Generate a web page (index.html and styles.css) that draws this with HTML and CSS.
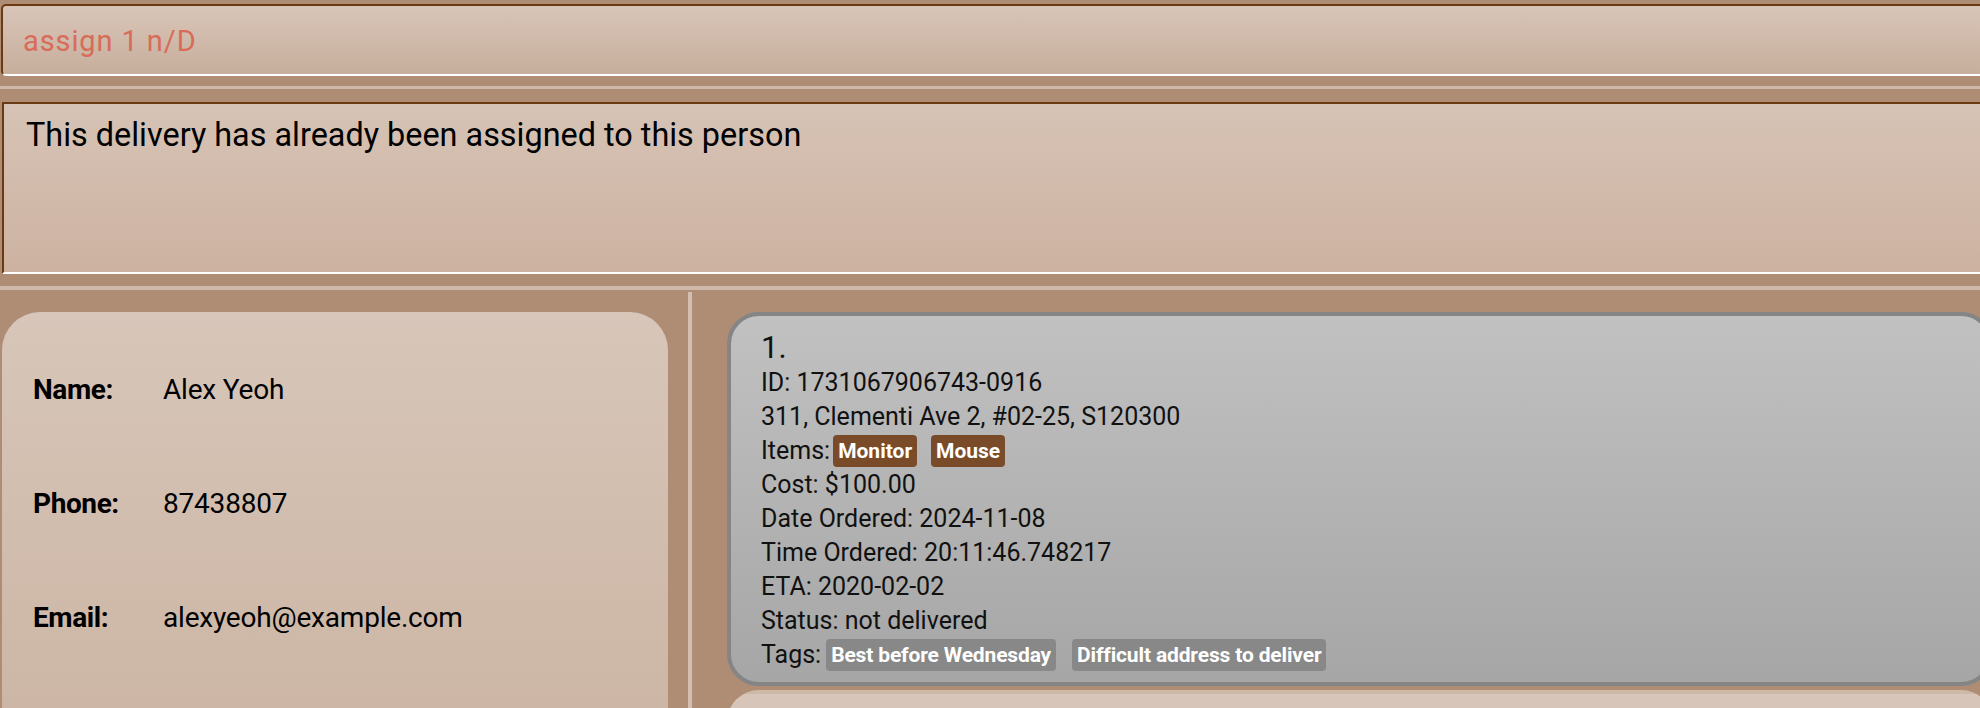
FILE: index.html
```html
<!DOCTYPE html>
<html lang="en">
<head>
<meta charset="utf-8">
<title>Delivery assignment</title>
<link rel="stylesheet" href="styles.css">
</head>
<body>
<div class="app">
  <div class="command-wrap">
    <div class="command-box"><span class="command-text">assign 1 n/D</span></div>
  </div>
  <div class="sep sep-upper"></div>
  <div class="result-wrap">
    <div class="result-box">This delivery has already been assigned to this person</div>
  </div>
  <div class="sep sep-lower"></div>
  <div class="split">
    <div class="left-pane">
      <div class="info-card">
        <div class="info-row"><span class="info-label">Name:</span><span class="info-value">Alex Yeoh</span></div>
        <div class="info-row"><span class="info-label">Phone:</span><span class="info-value">87438807</span></div>
        <div class="info-row"><span class="info-label">Email:</span><span class="info-value">alexyeoh@example.com</span></div>
      </div>
    </div>
    <div class="divider"></div>
    <div class="right-pane">
      <div class="card card-selected">
        <div class="card-index">1.</div>
        <div class="card-line">ID: 1731067906743-0916</div>
        <div class="card-line">311, Clementi Ave 2, #02-25, S120300</div>
        <div class="card-line card-badges"><span class="badge-label">Items:</span><span class="badge badge-item">Monitor</span><span class="badge badge-item">Mouse</span></div>
        <div class="card-line">Cost: $100.00</div>
        <div class="card-line">Date Ordered: 2024-11-08</div>
        <div class="card-line">Time Ordered: 20:11:46.748217</div>
        <div class="card-line">ETA: 2020-02-02</div>
        <div class="card-line">Status: not delivered</div>
        <div class="card-line card-badges"><span class="badge-label tags-label">Tags:</span><span class="badge badge-tag">Best before Wednesday</span><span class="badge badge-tag">Difficult address to deliver</span></div>
      </div>
      <div class="card card-next"></div>
    </div>
  </div>
</div>
</body>
</html>
```

FILE: styles.css
```css
* { box-sizing: border-box; }

html, body {
  margin: 0;
  padding: 0;
  width: 1980px;
  height: 708px;
  overflow: hidden;
  background: #ae8d74;
  font-family: Roboto, "Liberation Sans", sans-serif;
  color: #000;
}

.app {
  width: 1980px;
  height: 708px;
  overflow: hidden;
  padding-top: 4px;
  display: flex;
  flex-direction: column;
}

.command-wrap {
  padding-left: 1px;
  margin-right: -20px;
}

.command-box {
  height: 72px;
  border: 2px solid #6b3a12;
  border-bottom-color: #ffffff;
  border-radius: 5px;
  background: linear-gradient(#d8c5b8, #c7ae9c);
  display: flex;
  align-items: center;
  padding-left: 20px;
}

.command-text {
  font-size: 29px;
  color: #d96b59;
  letter-spacing: 0.9px;
  padding-top: 2px;
}

.sep {
  background: #cdb8a9;
  flex-shrink: 0;
}

.sep-upper {
  height: 3px;
  margin-top: 10px;
}

.result-wrap {
  padding-left: 2px;
  margin-top: 13px;
  margin-right: -20px;
}

.result-box {
  height: 172px;
  border: 2px solid #6b3a12;
  border-bottom-color: #ffffff;
  background: linear-gradient(#d6c3b5, #cdb2a1);
  padding: 12px 0 0 22px;
  font-size: 32.4px;
  line-height: 38px;
}

.sep-lower {
  height: 4px;
  margin-top: 12px;
  background: #cfb9aa;
}

.split {
  flex: 1;
  display: flex;
  min-height: 0;
}

.left-pane {
  width: 688px;
  flex-shrink: 0;
  padding: 22px 20px 0 2px;
}

.info-card {
  height: 420px;
  border-radius: 38px 38px 0 0;
  background: linear-gradient(#d7c6b9, #ccb5a4);
  padding: 58px 0 0 31px;
}

.info-row {
  height: 114px;
  display: flex;
  font-size: 28px;
  line-height: 40px;
}

.info-label {
  width: 130px;
  font-weight: 700;
  letter-spacing: -0.4px;
}

.info-value {
  letter-spacing: -0.2px;
}

.divider {
  width: 4px;
  flex-shrink: 0;
  margin-top: 2px;
  background: #d3beaf;
}

.right-pane {
  flex: 1;
  overflow: hidden;
  padding: 22px 0 0 35px;
}

.card {
  width: 1266px;
  border: 4px solid #858585;
  border-radius: 32px;
}

.card-selected {
  background: linear-gradient(#c1c1c1, #a6a6a6);
  padding: 14px 30px 10px 30px;
  color: #111;
}

.card-next {
  margin-top: 4px;
  height: 200px;
  border-color: transparent;
  background: linear-gradient(#d7c6b9, #ceb8a8);
}

.card-index {
  font-size: 31px;
  line-height: 36px;
}

.card-line {
  font-size: 25px;
  line-height: 34px;
  height: 34px;
  white-space: nowrap;
}

.card-badges {
  display: flex;
  align-items: center;
}

.badge-label {
  margin-right: 3px;
}

.tags-label {
  margin-right: 5px;
}

.badge {
  height: 32px;
  line-height: 32px;
  padding: 0 5px;
  border-radius: 4px;
  font-size: 21px;
  font-weight: 700;
  color: #fff;
  margin-right: 14px;
}

.badge-item {
  background: #7a4b29;
}

.badge-tag {
  background: #888888;
  margin-right: 16px;
  letter-spacing: -0.15px;
}
```
